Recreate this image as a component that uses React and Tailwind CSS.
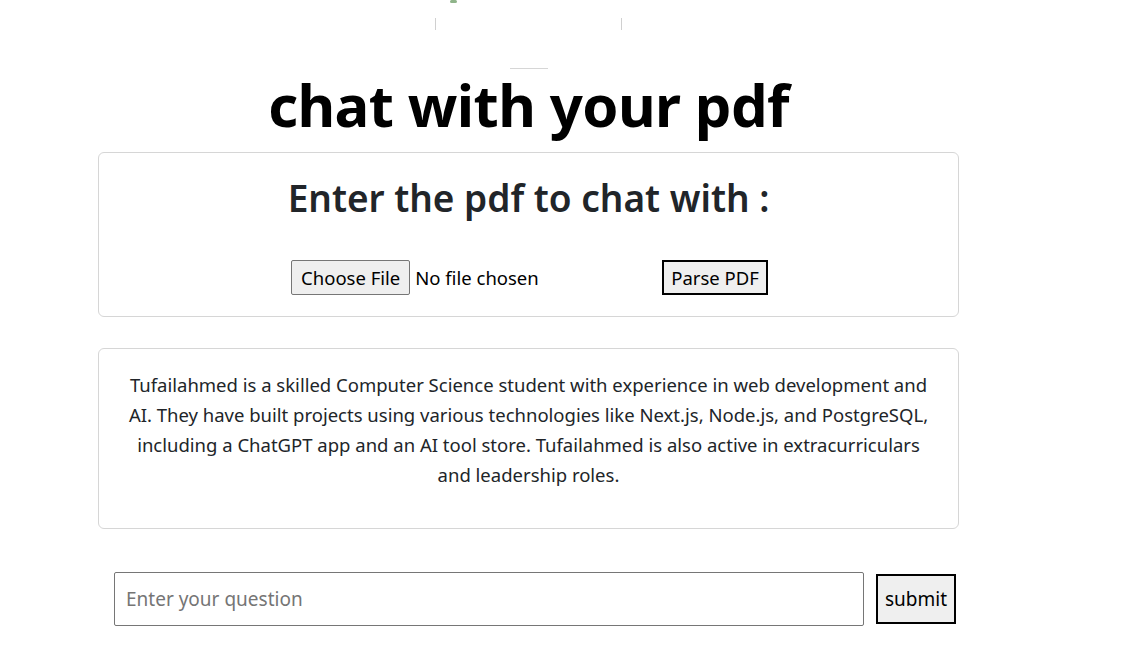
import React, { useState } from 'react';

const App = () => {
  const [question, setQuestion] = useState('');

  return (
    <div className="min-h-screen bg-white text-[#212529]" style={{ fontFamily: '"Noto Sans", "Open Sans", sans-serif' }}>
      {/* broken logo image */}
      <div className="relative h-[70px] w-full">
        <div className="absolute left-[450px] top-0 h-[3px] w-[7px] bg-[#8fb48a] rounded-sm"></div>
        <div className="absolute left-[435px] top-[18px] h-[12px] w-px bg-[#d0d0d0]"></div>
        <div className="absolute left-[621px] top-[18px] h-[12px] w-px bg-[#d0d0d0]"></div>
        <div className="absolute left-[510px] top-[68px] h-px w-[38px] bg-[#d6d6d6]"></div>
      </div>

      <div className="ml-[98px] w-[861px]">
        <h1 className="text-center text-[58px] font-bold leading-[70px] text-black tracking-[-0.6px]">chat with your pdf</h1>

        <div className="mt-[12px] h-[165px] rounded-md border border-[#d6d6d6] flex flex-col items-center">
          <h2 className="mt-[23px] text-[37px] font-semibold leading-[44px]">Enter the pdf to chat with :</h2>
          <div className="mt-[40px] flex items-center ml-[2px]">
            <label className="flex items-center cursor-pointer text-[18.5px] text-black">
              <span className="h-[35px] px-[9px] flex items-center bg-[#efefef] border border-[#767676] rounded-[2px]">Choose File</span>
              <span className="ml-[5px] w-[247px]">No file chosen</span>
              <input type="file" className="hidden" />
            </label>
            <button className="h-[35px] px-[7px] bg-[#efefef] border-2 border-black text-[18.5px] text-black">Parse PDF</button>
          </div>
        </div>

        <div className="mt-[31px] h-[181px] rounded-md border border-[#d6d6d6] px-[24px] pt-[21px]">
          <p className="text-center text-[18.5px] leading-[30px]">
            Tufailahmed is a skilled Computer Science student with experience in web development and AI. They have built projects using various technologies like Next.js, Node.js, and PostgreSQL, including a ChatGPT app and an AI tool store. Tufailahmed is also active in extracurriculars and leadership roles.
          </p>
        </div>

        <div className="mt-[43px] ml-[16px] flex items-center">
          <input
            value={question}
            onChange={(e) => setQuestion(e.target.value)}
            placeholder="Enter your question"
            className="h-[54px] w-[750px] border border-[#767676] rounded-[2px] px-[11px] text-[19px] placeholder:text-[#757575] outline-none"
          />
          <button className="ml-[12px] h-[50px] w-[80px] bg-[#efefef] border-2 border-black text-[19px] text-black">submit</button>
        </div>
      </div>
    </div>
  );
};

export default App;
